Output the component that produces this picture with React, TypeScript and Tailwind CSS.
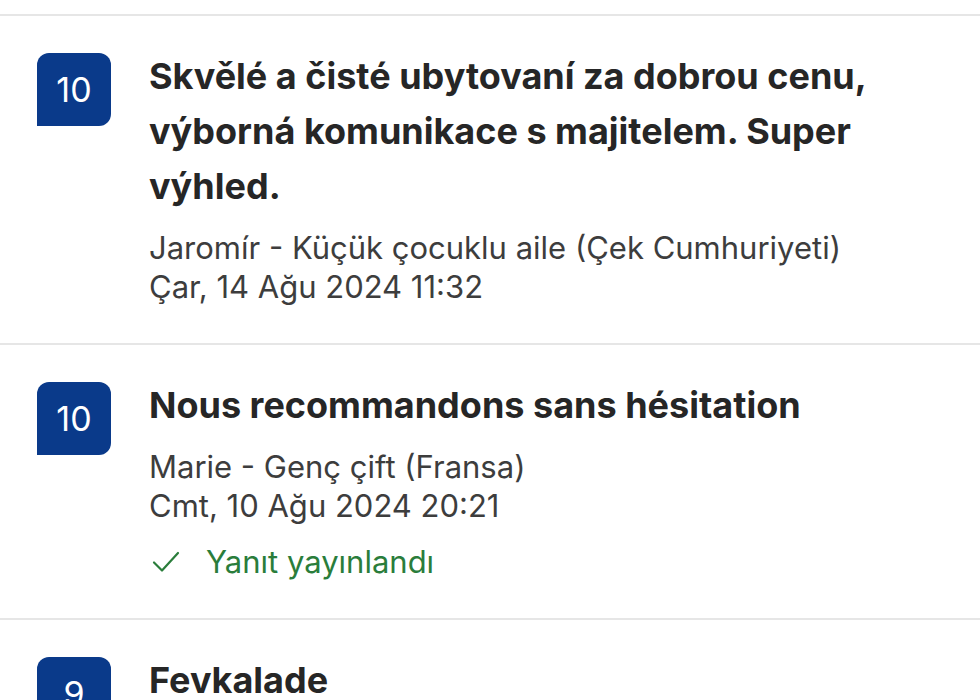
import React from "react";

interface Review {
  score: string;
  title: string;
  author: string;
  date: string;
  replied?: boolean;
}

const reviews: Review[] = [
  {
    score: "10",
    title:
      "Skvělé a čisté ubytovaní za dobrou cenu, výborná komunikace s majitelem. Super výhled.",
    author: "Jaromír - Küçük çocuklu aile (Çek Cumhuriyeti)",
    date: "Çar, 14 Ağu 2024 11:32",
  },
  {
    score: "10",
    title: "Nous recommandons sans hésitation",
    author: "Marie - Genç çift (Fransa)",
    date: "Cmt, 10 Ağu 2024 20:21",
    replied: true,
  },
  {
    score: "9",
    title: "Fevkalade",
    author: "",
    date: "",
  },
];

function ReviewRow({ review }: { review: Review }) {
  return (
    <div className="flex items-start gap-[38px] border-b-2 border-[#e6e6e6] pl-[37px] pr-[40px] pt-[37px] pb-[37px]">
      <div className="flex h-[73px] w-[74px] shrink-0 items-center justify-center rounded-[12px] rounded-bl-none bg-[#0a3a8a] text-[34px] text-white">
        {review.score}
      </div>
      <div className="flex flex-col">
        <h3 className="-mt-[4px] text-[36px] font-bold leading-[55px] text-[#262626]">
          {review.title}
        </h3>
        {review.author && (
          <div className="mt-[14px] text-[31px] leading-[39px] text-[#3d3d3d]">
            <p>{review.author}</p>
            <p>{review.date}</p>
          </div>
        )}
        {review.replied && (
          <div className="mt-[17px] flex items-center gap-[26px] text-[31px] leading-[39px] text-[#2a7d3b]">
            <svg
              width="28"
              height="24"
              viewBox="0 0 28 24"
              fill="none"
              stroke="currentColor"
              strokeWidth="2.2"
              strokeLinecap="round"
              strokeLinejoin="round"
              className="ml-[3px]"
            >
              <path d="M2 12.5 L10 20.5 L26 3" />
            </svg>
            <span>Yanıt yayınlandı</span>
          </div>
        )}
      </div>
    </div>
  );
}

export default function App() {
  return (
    <div
      className="h-[700px] w-[980px] overflow-hidden bg-white"
      style={{ fontFamily: "Inter, 'Noto Sans', sans-serif" }}
    >
      <div className="h-[16px] border-b-2 border-[#e6e6e6]" />
      {reviews.map((r, i) => (
        <ReviewRow key={i} review={r} />
      ))}
    </div>
  );
}
